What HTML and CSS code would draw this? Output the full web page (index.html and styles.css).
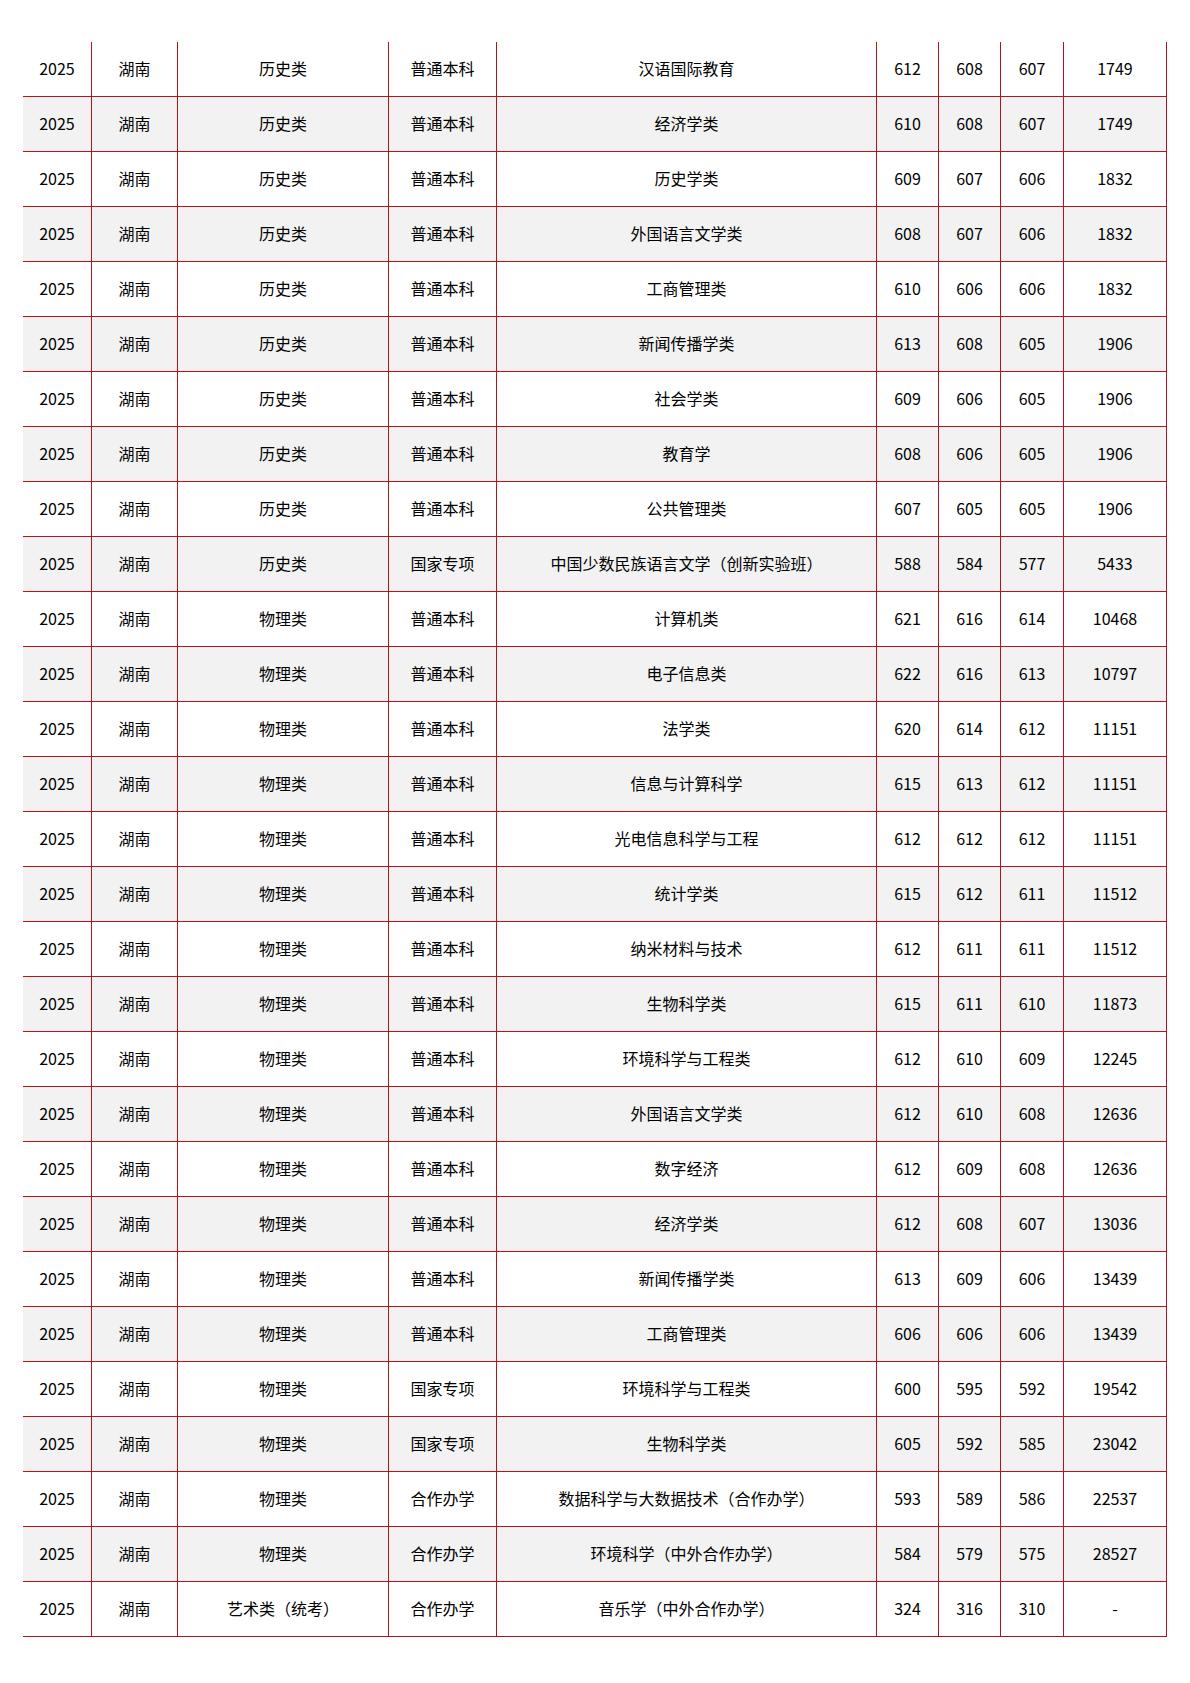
FILE: index.html
```html
<!DOCTYPE html>
<html lang="zh-CN">
<head>
<meta charset="utf-8">
<title>录取分数</title>
<link rel="stylesheet" href="styles.css">
</head>
<body>
<div class="table">
<div class="row"><div class="c">2025</div><div class="c">湖南</div><div class="c">历史类</div><div class="c">普通本科</div><div class="c">汉语国际教育</div><div class="c">612</div><div class="c">608</div><div class="c">607</div><div class="c">1749</div></div>
<div class="row"><div class="c">2025</div><div class="c">湖南</div><div class="c">历史类</div><div class="c">普通本科</div><div class="c">经济学类</div><div class="c">610</div><div class="c">608</div><div class="c">607</div><div class="c">1749</div></div>
<div class="row"><div class="c">2025</div><div class="c">湖南</div><div class="c">历史类</div><div class="c">普通本科</div><div class="c">历史学类</div><div class="c">609</div><div class="c">607</div><div class="c">606</div><div class="c">1832</div></div>
<div class="row"><div class="c">2025</div><div class="c">湖南</div><div class="c">历史类</div><div class="c">普通本科</div><div class="c">外国语言文学类</div><div class="c">608</div><div class="c">607</div><div class="c">606</div><div class="c">1832</div></div>
<div class="row"><div class="c">2025</div><div class="c">湖南</div><div class="c">历史类</div><div class="c">普通本科</div><div class="c">工商管理类</div><div class="c">610</div><div class="c">606</div><div class="c">606</div><div class="c">1832</div></div>
<div class="row"><div class="c">2025</div><div class="c">湖南</div><div class="c">历史类</div><div class="c">普通本科</div><div class="c">新闻传播学类</div><div class="c">613</div><div class="c">608</div><div class="c">605</div><div class="c">1906</div></div>
<div class="row"><div class="c">2025</div><div class="c">湖南</div><div class="c">历史类</div><div class="c">普通本科</div><div class="c">社会学类</div><div class="c">609</div><div class="c">606</div><div class="c">605</div><div class="c">1906</div></div>
<div class="row"><div class="c">2025</div><div class="c">湖南</div><div class="c">历史类</div><div class="c">普通本科</div><div class="c">教育学</div><div class="c">608</div><div class="c">606</div><div class="c">605</div><div class="c">1906</div></div>
<div class="row"><div class="c">2025</div><div class="c">湖南</div><div class="c">历史类</div><div class="c">普通本科</div><div class="c">公共管理类</div><div class="c">607</div><div class="c">605</div><div class="c">605</div><div class="c">1906</div></div>
<div class="row"><div class="c">2025</div><div class="c">湖南</div><div class="c">历史类</div><div class="c">国家专项</div><div class="c">中国少数民族语言文学（创新实验班）</div><div class="c">588</div><div class="c">584</div><div class="c">577</div><div class="c">5433</div></div>
<div class="row"><div class="c">2025</div><div class="c">湖南</div><div class="c">物理类</div><div class="c">普通本科</div><div class="c">计算机类</div><div class="c">621</div><div class="c">616</div><div class="c">614</div><div class="c">10468</div></div>
<div class="row"><div class="c">2025</div><div class="c">湖南</div><div class="c">物理类</div><div class="c">普通本科</div><div class="c">电子信息类</div><div class="c">622</div><div class="c">616</div><div class="c">613</div><div class="c">10797</div></div>
<div class="row"><div class="c">2025</div><div class="c">湖南</div><div class="c">物理类</div><div class="c">普通本科</div><div class="c">法学类</div><div class="c">620</div><div class="c">614</div><div class="c">612</div><div class="c">11151</div></div>
<div class="row"><div class="c">2025</div><div class="c">湖南</div><div class="c">物理类</div><div class="c">普通本科</div><div class="c">信息与计算科学</div><div class="c">615</div><div class="c">613</div><div class="c">612</div><div class="c">11151</div></div>
<div class="row"><div class="c">2025</div><div class="c">湖南</div><div class="c">物理类</div><div class="c">普通本科</div><div class="c">光电信息科学与工程</div><div class="c">612</div><div class="c">612</div><div class="c">612</div><div class="c">11151</div></div>
<div class="row"><div class="c">2025</div><div class="c">湖南</div><div class="c">物理类</div><div class="c">普通本科</div><div class="c">统计学类</div><div class="c">615</div><div class="c">612</div><div class="c">611</div><div class="c">11512</div></div>
<div class="row"><div class="c">2025</div><div class="c">湖南</div><div class="c">物理类</div><div class="c">普通本科</div><div class="c">纳米材料与技术</div><div class="c">612</div><div class="c">611</div><div class="c">611</div><div class="c">11512</div></div>
<div class="row"><div class="c">2025</div><div class="c">湖南</div><div class="c">物理类</div><div class="c">普通本科</div><div class="c">生物科学类</div><div class="c">615</div><div class="c">611</div><div class="c">610</div><div class="c">11873</div></div>
<div class="row"><div class="c">2025</div><div class="c">湖南</div><div class="c">物理类</div><div class="c">普通本科</div><div class="c">环境科学与工程类</div><div class="c">612</div><div class="c">610</div><div class="c">609</div><div class="c">12245</div></div>
<div class="row"><div class="c">2025</div><div class="c">湖南</div><div class="c">物理类</div><div class="c">普通本科</div><div class="c">外国语言文学类</div><div class="c">612</div><div class="c">610</div><div class="c">608</div><div class="c">12636</div></div>
<div class="row"><div class="c">2025</div><div class="c">湖南</div><div class="c">物理类</div><div class="c">普通本科</div><div class="c">数字经济</div><div class="c">612</div><div class="c">609</div><div class="c">608</div><div class="c">12636</div></div>
<div class="row"><div class="c">2025</div><div class="c">湖南</div><div class="c">物理类</div><div class="c">普通本科</div><div class="c">经济学类</div><div class="c">612</div><div class="c">608</div><div class="c">607</div><div class="c">13036</div></div>
<div class="row"><div class="c">2025</div><div class="c">湖南</div><div class="c">物理类</div><div class="c">普通本科</div><div class="c">新闻传播学类</div><div class="c">613</div><div class="c">609</div><div class="c">606</div><div class="c">13439</div></div>
<div class="row"><div class="c">2025</div><div class="c">湖南</div><div class="c">物理类</div><div class="c">普通本科</div><div class="c">工商管理类</div><div class="c">606</div><div class="c">606</div><div class="c">606</div><div class="c">13439</div></div>
<div class="row"><div class="c">2025</div><div class="c">湖南</div><div class="c">物理类</div><div class="c">国家专项</div><div class="c">环境科学与工程类</div><div class="c">600</div><div class="c">595</div><div class="c">592</div><div class="c">19542</div></div>
<div class="row"><div class="c">2025</div><div class="c">湖南</div><div class="c">物理类</div><div class="c">国家专项</div><div class="c">生物科学类</div><div class="c">605</div><div class="c">592</div><div class="c">585</div><div class="c">23042</div></div>
<div class="row"><div class="c">2025</div><div class="c">湖南</div><div class="c">物理类</div><div class="c">合作办学</div><div class="c">数据科学与大数据技术（合作办学）</div><div class="c">593</div><div class="c">589</div><div class="c">586</div><div class="c">22537</div></div>
<div class="row"><div class="c">2025</div><div class="c">湖南</div><div class="c">物理类</div><div class="c">合作办学</div><div class="c">环境科学（中外合作办学）</div><div class="c">584</div><div class="c">579</div><div class="c">575</div><div class="c">28527</div></div>
<div class="row"><div class="c">2025</div><div class="c">湖南</div><div class="c">艺术类（统考）</div><div class="c">合作办学</div><div class="c">音乐学（中外合作办学）</div><div class="c">324</div><div class="c">316</div><div class="c">310</div><div class="c">-</div></div>
</div>
</body>
</html>
```

FILE: styles.css
```css
html, body {
  margin: 0;
  padding: 0;
  background: #ffffff;
}

body {
  font-family: "Noto Sans CJK SC", "Noto Sans", "DejaVu Sans", sans-serif;
  font-size: 16px;
  color: #000000;
}

.table {
  margin: 42px 0 0 23px;
  width: 1144px;
}

.row {
  display: grid;
  grid-template-columns: 69px 86px 211px 108px 380px 62px 62px 63px 103px;
  height: 55px;
}

.row:nth-child(even) {
  background: #f2f2f2;
}

.c {
  box-sizing: border-box;
  display: flex;
  align-items: center;
  justify-content: center;
  padding-bottom: 2px;
  border-bottom: 1px solid #b8111b;
  border-right: 1px solid #b8111b;
  white-space: nowrap;
  line-height: 1;
}
```
